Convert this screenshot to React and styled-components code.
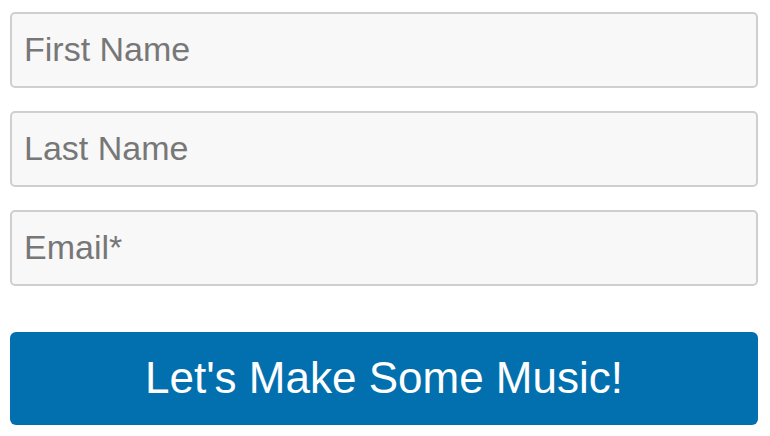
import React from "react";
import styled, { createGlobalStyle } from "styled-components";

const GlobalStyle = createGlobalStyle`
  html, body {
    margin: 0;
    padding: 0;
    background: #ffffff;
  }
  body {
    font-family: "Liberation Sans", Arial, Helvetica, sans-serif;
  }
`;

const Form = styled.form`
  display: flex;
  flex-direction: column;
  padding: 12px 12px 0 10px;
  width: 748px;
`;

const Field = styled.input`
  box-sizing: border-box;
  width: 100%;
  height: 76px;
  margin: 0 0 23px;
  padding: 0 12px 2px;
  border: 2px solid #cfcfcf;
  border-radius: 5px;
  background: #f8f8f8;
  font-family: "Liberation Sans", Arial, sans-serif;
  font-size: 34px;
  color: #777777;
  outline: none;

  &::placeholder {
    color: #777777;
    opacity: 1;
  }
`;

const SubmitButton = styled.button`
  box-sizing: border-box;
  width: 100%;
  height: 93px;
  margin-top: 23px;
  padding: 0 0 2px;
  border: none;
  border-radius: 6px;
  background: #0270ae;
  color: #ffffff;
  font-family: "Liberation Sans", Arial, sans-serif;
  font-size: 44px;
  cursor: pointer;
`;

const fields = [
  { name: "firstName", placeholder: "First Name", type: "text" },
  { name: "lastName", placeholder: "Last Name", type: "text" },
  { name: "email", placeholder: "Email*", type: "email" },
];

const App = () => {
  return (
    <>
      <GlobalStyle />
      <Form onSubmit={(e) => e.preventDefault()}>
        {fields.map((field) => (
          <Field key={field.name} {...field} />
        ))}
        <SubmitButton type="submit">Let's Make Some Music!</SubmitButton>
      </Form>
    </>
  );
};

export default App;
